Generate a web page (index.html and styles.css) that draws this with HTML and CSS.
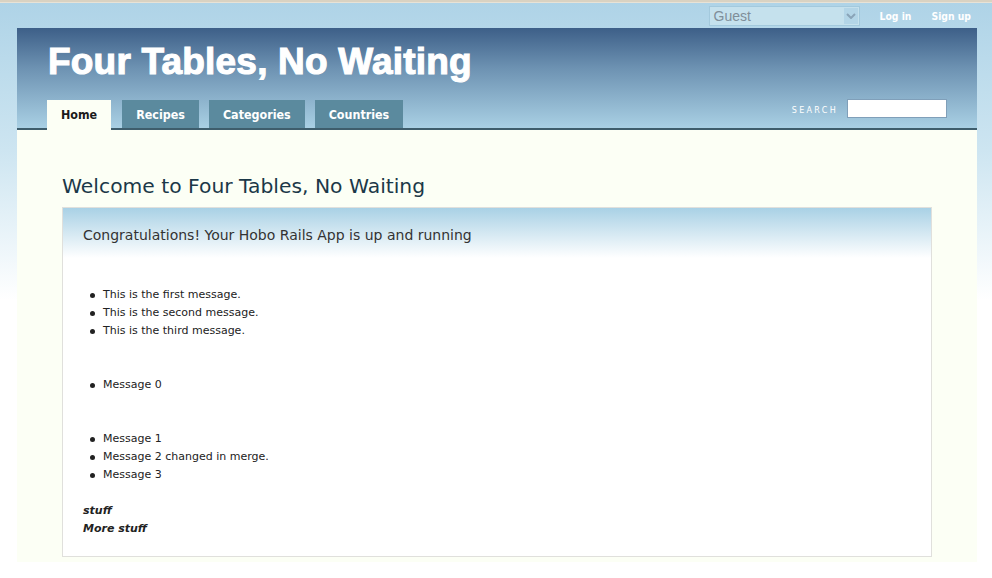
FILE: index.html
```html
<!DOCTYPE html>
<html>
<head>
<meta charset="utf-8">
<link rel="stylesheet" href="styles.css">
</head>
<body>
<div class="topline"></div>
<div class="account-nav">
  <div class="select">
    <span class="select-value">Guest</span>
    <span class="select-btn"><svg width="10" height="6" viewBox="0 0 10 6"><path d="M1 1 L5 5 L9 1" fill="none" stroke="#8aa4b8" stroke-width="2"/></svg></span>
  </div>
  <a class="acc-link" href="#">Log in</a>
  <a class="acc-link" href="#">Sign up</a>
</div>
<div class="page">
  <header class="page-header">
    <h1 class="app-name">Four Tables, No Waiting</h1>
    <div class="nav-row">
      <nav class="tabs">
        <a class="tab current" href="#">Home</a>
        <a class="tab" href="#">Recipes</a>
        <a class="tab" href="#">Categories</a>
        <a class="tab" href="#">Countries</a>
      </nav>
      <div class="search">
        <span class="search-label">SEARCH</span>
        <input class="search-input" type="text">
      </div>
    </div>
  </header>
  <main class="content">
    <h2 class="welcome">Welcome to Four Tables, No Waiting</h2>
    <section class="box">
      <h3 class="box-title">Congratulations! Your Hobo Rails App is up and running</h3>
      <div class="box-body">
        <ul class="msgs">
          <li>This is the first message.</li>
          <li>This is the second message.</li>
          <li>This is the third message.</li>
        </ul>
        <ul class="msgs">
          <li>Message 0</li>
        </ul>
        <ul class="msgs">
          <li>Message 1</li>
          <li>Message 2 changed in merge.</li>
          <li>Message 3</li>
        </ul>
        <p class="stuff">stuff<br>More stuff</p>
      </div>
    </section>
  </main>
</div>
</body>
</html>
```

FILE: styles.css
```css
html, body { margin: 0; padding: 0; }
body {
  background: #fff linear-gradient(to bottom, #aed3e7 0px, #cde5f1 150px, #ffffff 300px) no-repeat;
  font-family: "DejaVu Sans", sans-serif;
  min-height: 578px;
}
.topline {
  height: 2px;
  background: #d9d2c2;
  border-bottom: 1px solid #e8e2d6;
}
.account-nav {
  height: 25px;
  display: flex;
  align-items: center;
  justify-content: flex-end;
  padding-right: 21px;
}
.select {
  width: 149px;
  height: 18px;
  border: 1px solid #a3c9dd;
  background: #c5e1ed;
  display: flex;
  align-items: center;
  justify-content: space-between;
  margin-right: 20px;
}
.select-value {
  font-family: "Liberation Sans", sans-serif;
  font-size: 14px;
  color: #7f8e99;
  padding-left: 4px;
}
.select-btn {
  width: 14px;
  height: 16px;
  margin-right: 1px;
  background: #b3d5e7;
  display: flex;
  align-items: center;
  justify-content: center;
}
.acc-link {
  font-family: "DejaVu Sans Condensed", "DejaVu Sans", sans-serif;
  font-weight: bold;
  font-size: 10.3px;
  color: #fff;
  text-decoration: none;
  margin-left: 20px;
}
.acc-link:first-of-type { margin-left: 0; }
.page {
  width: 960px;
  margin-left: 17px;
  background: #fcfff5;
}
.page-header {
  height: 100px;
  background: linear-gradient(to bottom, #3d5f88 0%, #6d92b2 40%, #a9d0e4 100%);
  border-bottom: 2px solid #3e5d6c;
  display: flex;
  flex-direction: column;
  justify-content: space-between;
}
.app-name {
  margin: 0;
  padding: 13px 0 0 31px;
  font-family: "Liberation Sans", sans-serif;
  font-weight: 900;
  font-size: 37px;
  letter-spacing: 0.2px;
  color: #fff;
  line-height: 42px;
  -webkit-text-stroke: 1.1px #fff;
}
.nav-row {
  display: flex;
  justify-content: space-between;
  align-items: flex-end;
  padding-left: 30px;
  padding-right: 30px;
}
.tabs { display: flex; gap: 10px; }
.tab {
  height: 28px;
  line-height: 29px;
  padding: 0 14px;
  background: #5b8a9e;
  color: #fff;
  font-family: "DejaVu Sans Condensed", "DejaVu Sans", sans-serif;
  font-weight: bold;
  font-size: 12.4px;
  text-decoration: none;
}
.tab.current {
  background: #fcfff5;
  color: #1a1a1a;
  height: 30px;
  margin-bottom: -2px;
  margin-right: 1px;
}
.search {
  display: flex;
  align-items: center;
  margin-bottom: 10px;
}
.search-label {
  font-size: 8px;
  letter-spacing: 2.3px;
  color: #fff;
  margin-right: 9px;
  margin-left: -3px;
  padding-top: 4px;
}
.search-input {
  width: 98px;
  height: 17px;
  border: 1px solid #809fb9;
  padding: 0;
  margin: 0;
  background: #fff;
}
.content {
  padding: 45px 45px 5px 45px;
}
.welcome {
  margin: 0 0 10px 0;
  font-weight: normal;
  font-size: 20.3px;
  line-height: 22px;
  color: #1b3848;
}
.box {
  border: 1px solid #e0e0dc;
  background: #fff linear-gradient(to bottom, #a9d1e5 0px, #ffffff 50px) no-repeat;
}
.box-title {
  margin: 0;
  padding: 19px 20px 0 20px;
  height: 53px;
  box-sizing: border-box;
  font-weight: normal;
  font-size: 14px;
  color: #333;
}
.box-body {
  padding: 25px 20px 18px 20px;
  font-size: 11px;
  color: #222;
}
.msgs {
  margin: 0 0 36px 0;
  padding-left: 20px;
  line-height: 18px;
  list-style: none;
}
.msgs li { position: relative; }
.msgs li::before {
  content: "";
  position: absolute;
  left: -13px;
  top: 7px;
  width: 5px;
  height: 5px;
  border-radius: 50%;
  background: #222;
}
.msgs:last-of-type { margin-bottom: 18px; }
.stuff {
  margin: 0;
  font-weight: bold;
  font-style: italic;
  line-height: 18px;
}
```
